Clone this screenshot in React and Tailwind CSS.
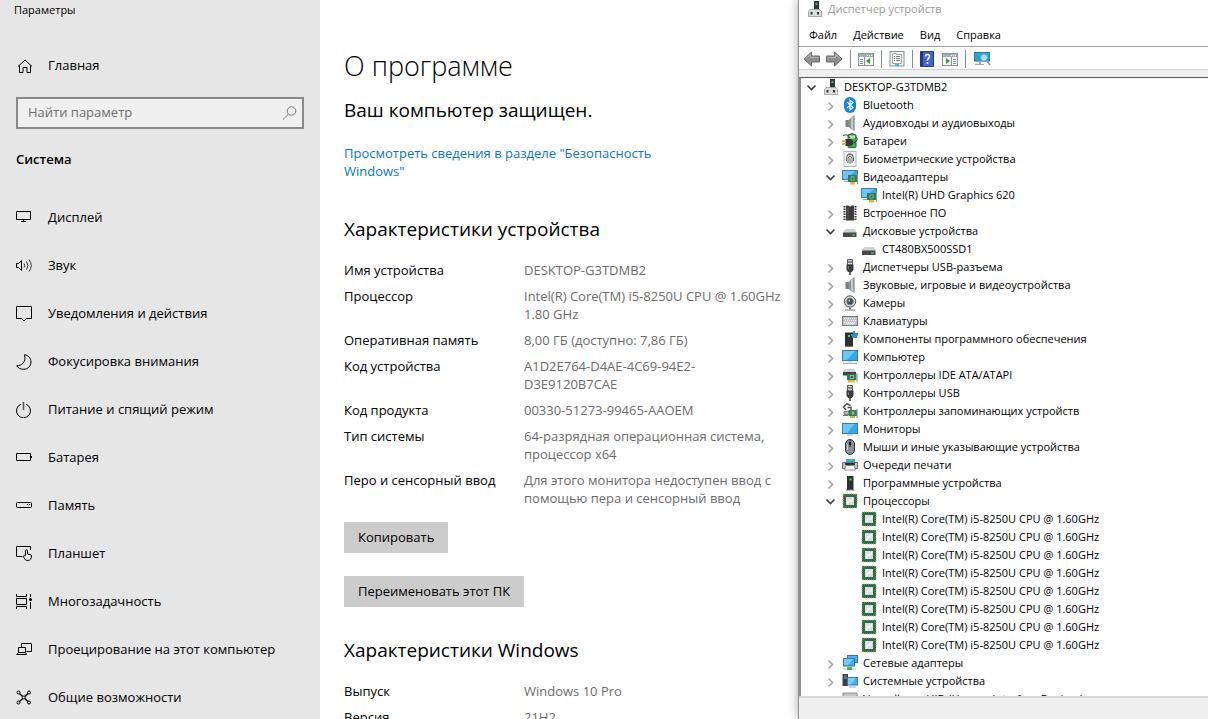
import { useState } from "react";

/* ---------- settings sidebar icons ---------- */

const Glyph = ({ children }) => (
  <svg
    viewBox="0 0 16 16"
    className="w-4 h-4 shrink-0"
    fill="none"
    stroke="#000"
    strokeWidth="1"
    aria-hidden="true"
  >
    {children}
  </svg>
);

const HomeIcon = () => (
  <Glyph>
    <path d="M2 8.500 9 2l7 6.500M3.500 7.500v7h3.500v-5h4v5h3.500v-7" />
  </Glyph>
);

const DisplayIcon = () => (
  <Glyph>
    <path d="M.5 1.500h14v8H.5zM7.500 9.500v2M5 11.500h5" />
  </Glyph>
);

const SoundIcon = () => (
  <Glyph>
    <path d="M.5 5.500h2l3-3v10l-3-3h-2z" />
    <path d="M8 5.500q1.500 2 0 4M10.500 3.500q3 4 0 8M13 1.500q4.500 6 0 12" stroke="#333" />
  </Glyph>
);

const NotifyIcon = () => (
  <Glyph>
    <path d="M.5.5h15v12h-5l-2.500 2.500-2.500-2.500h-5z" />
  </Glyph>
);

const MoonIcon = () => (
  <Glyph>
    <path d="M8.500.7c4 .8 6.500 3.600 6.500 7.300 0 4.200-3.300 7.300-7.500 7.300-3 0-5.500-1.300-6.800-3.600C5.500 12 10.500 8 8.500.7z" />
  </Glyph>
);

const PowerIcon = () => (
  <Glyph>
    <path d="M5 2.200a7 7 0 1 0 5 0" />
    <path d="M7.500 0v8" stroke="#555" strokeWidth="1.500" />
  </Glyph>
);

const BatteryIcon = () => (
  <Glyph>
    <path d="M.5 3.500h14v7H.5zM15.500 6v2" />
  </Glyph>
);

const StorageIcon = () => (
  <Glyph>
    <rect x=".5" y="4.500" width="15" height="5" rx="1" />
    <path d="M11 6.500h1M13 6.500h1" />
  </Glyph>
);

const TabletIcon = () => (
  <Glyph>
    <path d="M14.500 4V.5H.5v10h6" />
    <path d="M9.500 9.500V4.800q0-1 1-1t1 1V8l2.500.5q1.500.3 1.500 1.500c0 2-.8 4.500-3.700 4.500-2.300 0-3.800-1.500-4.300-4.500q.5-1.200 2-.5z" />
  </Glyph>
);

const MultitaskIcon = () => (
  <Glyph>
    <path d="M.5 0v2.500h10V0M.5 15v-2.500h10V15M.5 4.500h10v6H.5zM14.500 0v3M14.500 8v7" />
    <circle cx="14.500" cy="5.500" r="1.500" fill="#000" stroke="none" />
  </Glyph>
);

const ProjectIcon = () => (
  <Glyph>
    <path d="M5.500 5V1.500h10v8h-5" />
    <path d="M2.500 5.500h7v5h-7zM2.500 10.500l-1.800 2h9.800l-1-2" />
  </Glyph>
);

const SharedIcon = () => (
  <Glyph>
    <circle cx="2.500" cy="2.500" r="1.500" />
    <circle cx="13" cy="2.500" r="1.500" />
    <circle cx="2.500" cy="12.500" r="1.500" />
    <circle cx="13" cy="12.500" r="1.500" />
    <circle cx="7.800" cy="7.500" r="1.500" />
    <path d="M3.500 3.500l3.200 3M12 3.500 8.800 6.500M3.500 11.500l3.200-3M12 11.500 8.800 8.500" strokeWidth="1.300" />
  </Glyph>
);

const SearchIcon = () => (
  <svg viewBox="0 0 16 16" className="w-4 h-4 shrink-0" fill="none" stroke="#777" aria-hidden="true">
    <circle cx="9.500" cy="6" r="4.300" />
    <path d="M6.500 9.200 1 14.500" />
  </svg>
);

/* ---------- device manager icons ---------- */

const Art = ({ children }) => (
  <svg viewBox="0 0 16 16" className="w-4 h-4 shrink-0" fill="none" aria-hidden="true">
    {children}
  </svg>
);

const RootIcon = () => (
  <Art>
    <path d="M7 0h5v8H7z" fill="#2d3a33" />
    <path d="M8.500 2h2v2h-2z" fill="#6fa085" />
    <path d="M3 8.500h10l1.500 2v5H1.500v-5z" fill="#dcdcde" stroke="#8b8b90" strokeWidth=".7" />
    <path d="M3.500 11h2v2.500h-2zM10 11h2v2.500h-2z" fill="#333" />
  </Art>
);

const BluetoothIcon = () => (
  <Art>
    <rect x="2" y="0" width="12" height="16" rx="6" fill="#0a84e8" />
    <path d="M5 5l6 5.500L8 13V3l3 2.500L5 11" stroke="#fff" strokeWidth="1.200" />
  </Art>
);

const SpeakerIcon = () => (
  <Art>
    <path d="M3 5h4v7H3z" fill="#7b7f83" />
    <path d="M3.500 5v7" stroke="#b7bbbf" />
    <path d="M6.500 5l5-4.500v15l-5-3.500z" fill="#8d9297" />
    <path d="M9 3l2-1.800v13.500L9 13z" fill="#c3c8cc" />
    <path d="M11.500.5h1v15h-1z" fill="#676c71" />
  </Art>
);

const BatteriesIcon = () => (
  <Art>
    <rect x="6" y="1.500" width="8" height="13" rx="1" fill="#37b453" stroke="#1c6b32" />
    <path d="M7 2.500h6v3H7z" fill="#b9e8b2" />
    <path d="M8.500 0h3v2h-3z" fill="#666" />
    <path d="M1 2.500q5-2 7 2.500" stroke="#444" />
    <path d="M3.500 6h4q4 0 4 3.500T7.500 13h-4z" fill="#343a36" />
    <path d="M0 8h4M0 11h4" stroke="#c3a43a" strokeWidth="1.500" />
    <path d="M14 4q3 3-2 6" stroke="#333" />
  </Art>
);

const FingerprintIcon = () => (
  <Art>
    <rect x="2" y=".5" width="12" height="15" fill="#f4f4f2" stroke="#a9bcc4" />
    <path
      d="M4.500 10V7q0-3.500 3.500-3.500T11.500 7v3M6 12V7.500Q6 5.500 8 5.500t2 2V12M8 7.500V13M4.800 4.500Q8 1 11.200 4.500"
      stroke="#555"
      strokeWidth=".9"
    />
  </Art>
);

const Screen = ({ y = 2, h = 9 }) => (
  <>
    <rect x=".5" y={y} width="15" height={h} fill="#39a5ee" stroke="#3a7dab" strokeWidth="1" />
    <path d={`M1 ${y + 0.5}h12L5 ${y + h - 0.5}H1z`} fill="#6cc6f8" />
  </>
);

const DisplayAdapterIcon = () => (
  <Art>
    <Screen y={1.5} />
    <path d="M2 12.500h4" stroke="#9aa3a8" />
    <path d="M6 6h9v7H6z" fill="#2f7d4f" />
    <path d="M8.500 7.500h4v4h-4z" fill="#7fbd90" />
    <path d="M9.500 8.500h2v2h-2z" fill="#245c3a" />
    <path d="M8 13h5v2.500H8z" fill="#e0b93a" />
    <path d="M15.500 5v10" stroke="#999" />
  </Art>
);

const FirmwareIcon = () => (
  <Art>
    <path d="M2.500 1v14M13.500 1v14" stroke="#333" strokeWidth="2" strokeDasharray="1.500 1" />
    <path d="M4 .5h2.500q1.500 2 3 0H12v15H4z" fill="#3c3c3e" />
    <path d="M6 3v11" stroke="#5b5b5e" />
  </Art>
);

const DiskIcon = () => (
  <Art>
    <path d="M3 6h10l2 4H1z" fill="#cfd1d3" />
    <path d="M1 9.500h13.500V14H1z" fill="#45494c" />
    <path d="M10 12h3" stroke="#4ee06b" />
  </Art>
);

const UsbIcon = () => (
  <Art>
    <path d="M5.500.5h5V6h-5z" fill="#d8d8d8" stroke="#555" />
    <path d="M7 2v2M9 2v2" stroke="#333" />
    <path d="M4.500 5.500h7v5L10 13H6l-1.500-2.500z" fill="#3a3a3a" />
    <path d="M8 12v4" stroke="#3a3a3a" strokeWidth="1.500" />
    <path d="M6.500 7v3" stroke="#777" />
  </Art>
);

const CameraIcon = () => (
  <Art>
    <circle cx="8" cy="6.500" r="5.700" fill="#c9ccce" stroke="#55595c" />
    <circle cx="8" cy="6.500" r="3.200" fill="#3c4650" stroke="#777" />
    <circle cx="7.300" cy="5.700" r="1" fill="#b5c8d8" />
    <path d="M7 12.500h2v2H7z" fill="#777" />
    <path d="M3 15h10" stroke="#777" />
  </Art>
);

const KeyboardIcon = () => (
  <Art>
    <rect x=".5" y="3.500" width="15" height="9" fill="#bfc3c6" stroke="#73797e" />
    <path d="M2 5.500h12M2 9.500h12" stroke="#fff" strokeDasharray="1 1" />
    <path d="M3 7.500h11" stroke="#fff" strokeDasharray="1 1" />
    <path d="M4 11h8" stroke="#f2f2f2" />
  </Art>
);

const SoftwareComponentIcon = () => (
  <Art>
    <path d="M3 1.500h8V15H3z" fill="#2e3133" />
    <path d="M6 4h2v2H6z" fill="#3ee05c" />
    <path d="M3 15.500h8" stroke="#777" />
    <path d="M11 0h2v2h3v2.500h-1V7h-5V5h-1V3h2z" fill="#2c8ed6" />
  </Art>
);

const ComputerIcon = () => (
  <Art>
    <Screen y={1.5} h={10} />
    <path d="M1 14.500h14" stroke="#9db0bb" />
    <path d="M6 12h4v1.500H6z" fill="#cfd5d8" />
  </Art>
);

const IdeIcon = () => (
  <Art>
    <path d="M3 2h9l2 3H1z" fill="#cfd2d4" />
    <path d="M1 5h13v3.500H1z" fill="#3d4144" />
    <path d="M5 7h9.500v6H5z" fill="#2f7d4f" />
    <path d="M8 8h4v4H8z" fill="#7fbd90" />
    <path d="M9 9h2v2H9z" fill="#245c3a" />
    <path d="M6 13h7v2.500H6z" fill="#e0b93a" />
    <path d="M15 6v9" stroke="#999" />
  </Art>
);

const StorageControllerIcon = () => (
  <Art>
    <path d="M8.500 2.500 5 .8 1.500 4 4 7M5.500 4.500H9V7" stroke="#4c4f51" strokeWidth="1.500" />
    <path d="M2 8.500h6v3H2z" fill="#b9bcbe" stroke="#555" strokeWidth=".7" />
    <path d="M6.500 7h8.500v6H6.500z" fill="#2f7d4f" />
    <path d="M9.500 8.500h3v3h-3z" fill="#7fbd90" />
    <path d="M8 13h5v2H8z" fill="#d6b13c" />
    <path d="M15 6v9" stroke="#888" />
    <path d="M1 12.500h5" stroke="#777" />
  </Art>
);

const MonitorIcon = () => (
  <Art>
    <Screen y={2.5} h={10} />
    <path d="M5 14h6" stroke="#9db0bb" />
  </Art>
);

const MouseIcon = () => (
  <Art>
    <rect x="3.500" y=".5" width="9" height="15" rx="4.500" fill="#8a8f94" stroke="#303336" />
    <path d="M8 1v7" stroke="#303336" />
    <path d="M8 3v3" stroke="#111" strokeWidth="2" />
    <path d="M5.500 5v6" stroke="#c8ccd0" />
  </Art>
);

const PrinterIcon = () => (
  <Art>
    <path d="M4 2h9v4H4z" fill="#35a4e8" />
    <path d="M7 2h3v2H7z" fill="#42c56a" />
    <path d="M.5 5.500h15v6H.5z" fill="#c2c5c8" stroke="#6c7175" />
    <path d="M3 6h10v2H3z" fill="#333" />
    <path d="M4 8.500h8l1.500 4.500h-11z" fill="#fff" stroke="#777" strokeWidth=".8" />
  </Art>
);

const SoftwareDeviceIcon = () => (
  <Art>
    <path d="M5 1h6.500v14H5z" fill="#2e3133" />
    <path d="M7.500 3.500h2v2h-2z" fill="#3ee05c" />
    <path d="M4 15h8.500" stroke="#777" />
  </Art>
);

const CpuIcon = () => (
  <Art>
    <rect x="1" y="1" width="14" height="14" fill="#2f6a4b" />
    <rect x="1" y="1" width="14" height="14" stroke="#cdbf7d" strokeWidth=".8" strokeDasharray="1 1" />
    <rect x="4" y="4" width="8" height="8" fill="#dcdcdc" />
    <path d="M5 11V8l6-3v3z" fill="#eeeeee" />
  </Art>
);

const NetworkIcon = () => (
  <Art>
    <rect x="5.500" y=".5" width="10" height="7" fill="#4cb4f1" stroke="#3479a5" />
    <rect x="1.500" y="3.500" width="11" height="7.500" fill="#46adec" stroke="#3479a5" />
    <path d="M2 4h9l-5 6H2z" fill="#7accf8" />
    <path d="M7 11v3M1 14h13" stroke="#b9c2c6" />
    <path d="M5 12h5v3H5z" fill="#43b54c" />
  </Art>
);

const SystemIcon = () => (
  <Art>
    <path d="M.5 1h5.500v12H.5z" fill="#3d4144" />
    <path d="M2 3h2.500M2 5h2.500" stroke="#a5aaad" />
    <rect x="5.500" y="4.500" width="10" height="7.500" fill="#46adec" stroke="#3479a5" />
    <path d="M6 5h8l-5 6.500H6z" fill="#7accf8" />
    <path d="M7 14h7" stroke="#9db0bb" />
  </Art>
);

const HidIcon = () => (
  <Art>
    <path d="M1 2h14v10H1z" fill="#c5c8ca" stroke="#8d9194" />
  </Art>
);

/* ---------- toolbar icons ---------- */

const ArrowIcon = ({ flip }) => (
  <svg viewBox="0 0 18 16" className={`w-[18px] h-4 ${flip ? "-scale-x-100" : ""}`} aria-hidden="true">
    <path d="M1 8 8.500 1v4h8v6h-8v4z" fill="#8e8e8e" stroke="#6a6a6a" />
    <path d="M3 7.500 7.500 3.500v3h8" fill="none" stroke="#b9b9b9" />
  </svg>
);

const PaneIcon = ({ right }) => (
  <svg viewBox="0 0 16 16" className="w-4 h-4" fill="none" aria-hidden="true">
    <rect x=".5" y="2.500" width="15" height="12" fill="#f6f6f4" stroke="#8c949b" />
    <path d="M1 4.500h14" stroke="#a7b0b8" strokeWidth="3" />
    <path d="M9 4.500h5" stroke="#fff" strokeDasharray="1 1" />
    <path d={right ? "M9.500 6v8" : "M6.500 6v8"} stroke="#8c949b" />
    <path d={right ? "M11 8.500h3M11 10.500h3M11 12.500h3" : "M2 8.500h3M2 10.500h3M2 12.500h3"} stroke="#7d8891" />
    <path d={right ? "M4 7v6l4-3z" : "M12 7v6l-4-3z"} fill="#35a22f" />
  </svg>
);

const PropertiesIcon = () => (
  <svg viewBox="0 0 16 16" className="w-4 h-4" fill="none" aria-hidden="true">
    <rect x="1" y=".5" width="14" height="14.500" fill="#f3f3f3" stroke="#8a8f94" />
    <path d="M3.500 2.500h4v1h5v9h-9z" fill="#fff" stroke="#a2a7ab" />
    <path d="M5 5.500h1M7 5.500h4M5 7.500h1M7 7.500h4M5 9.500h1M7 9.500h4" stroke="#777c80" />
    <path d="M6 14h4" stroke="#41b8d8" strokeWidth="2" />
  </svg>
);

const HelpIcon = () => (
  <svg viewBox="0 0 14 16" className="w-3.5 h-4" fill="none" aria-hidden="true">
    <path d="M.5.5h13v15H.5z" fill="#4464c8" stroke="#23398a" />
    <path d="M1 1h2v14H1z" fill="#22388c" />
    <path d="M5.500 5.500q0-2 2-2t2 2c0 1.500-2 1.700-2 4M7.500 11v2" stroke="#fff" strokeWidth="1.600" />
  </svg>
);

const ScanIcon = () => (
  <svg viewBox="0 0 18 16" className="w-[18px] h-4" fill="none" aria-hidden="true">
    <rect x="1.500" y="1.500" width="15" height="8.500" fill="#2ea3d9" stroke="#2a7ca6" />
    <path d="M7 10v3" stroke="#9aabb4" strokeWidth="2" />
    <path d="M2 13.500h9" stroke="#9aabb4" />
    <circle cx="11" cy="6.500" r="3.700" fill="#a8e1f7" stroke="#5f93ad" />
    <path d="M13.500 9.500l3.500 4.500" stroke="#8097a5" strokeWidth="1.600" />
  </svg>
);

/* ---------- data ---------- */

const navItems = [
  { label: "Дисплей", Icon: DisplayIcon },
  { label: "Звук", Icon: SoundIcon },
  { label: "Уведомления и действия", Icon: NotifyIcon },
  { label: "Фокусировка внимания", Icon: MoonIcon },
  { label: "Питание и спящий режим", Icon: PowerIcon },
  { label: "Батарея", Icon: BatteryIcon },
  { label: "Память", Icon: StorageIcon },
  { label: "Планшет", Icon: TabletIcon },
  { label: "Многозадачность", Icon: MultitaskIcon },
  { label: "Проецирование на этот компьютер", Icon: ProjectIcon },
  { label: "Общие возможности", Icon: SharedIcon },
];

const deviceSpecs = [
  ["Имя устройства", "DESKTOP-G3TDMB2"],
  ["Процессор", "Intel(R) Core(TM) i5-8250U CPU @ 1.60GHz 1.80 GHz"],
  ["Оперативная память", "8,00 ГБ (доступно: 7,86 ГБ)"],
  ["Код устройства", "A1D2E764-D4AE-4C69-94E2-D3E9120B7CAE"],
  ["Код продукта", "00330-51273-99465-AAOEM"],
  ["Тип системы", "64-разрядная операционная система, процессор x64"],
  ["Перо и сенсорный ввод", "Для этого монитора недоступен ввод с помощью пера и сенсорный ввод"],
];

const windowsSpecs = [
  ["Выпуск", "Windows 10 Pro"],
  ["Версия", "21H2"],
];

const cpu = { label: "Intel(R) Core(TM) i5-8250U CPU @ 1.60GHz", Icon: CpuIcon };

const devices = [
  { label: "Bluetooth", Icon: BluetoothIcon },
  { label: "Аудиовходы и аудиовыходы", Icon: SpeakerIcon },
  { label: "Батареи", Icon: BatteriesIcon },
  { label: "Биометрические устройства", Icon: FingerprintIcon },
  {
    label: "Видеоадаптеры",
    Icon: DisplayAdapterIcon,
    children: [{ label: "Intel(R) UHD Graphics 620", Icon: DisplayAdapterIcon }],
  },
  { label: "Встроенное ПО", Icon: FirmwareIcon },
  {
    label: "Дисковые устройства",
    Icon: DiskIcon,
    children: [{ label: "CT480BX500SSD1", Icon: DiskIcon }],
  },
  { label: "Диспетчеры USB-разъема", Icon: UsbIcon },
  { label: "Звуковые, игровые и видеоустройства", Icon: SpeakerIcon },
  { label: "Камеры", Icon: CameraIcon },
  { label: "Клавиатуры", Icon: KeyboardIcon },
  { label: "Компоненты программного обеспечения", Icon: SoftwareComponentIcon },
  { label: "Компьютер", Icon: ComputerIcon },
  { label: "Контроллеры IDE ATA/ATAPI", Icon: IdeIcon },
  { label: "Контроллеры USB", Icon: UsbIcon },
  { label: "Контроллеры запоминающих устройств", Icon: StorageControllerIcon },
  { label: "Мониторы", Icon: MonitorIcon },
  { label: "Мыши и иные указывающие устройства", Icon: MouseIcon },
  { label: "Очереди печати", Icon: PrinterIcon },
  { label: "Программные устройства", Icon: SoftwareDeviceIcon },
  { label: "Процессоры", Icon: CpuIcon, children: Array(8).fill(cpu) },
  { label: "Сетевые адаптеры", Icon: NetworkIcon },
  { label: "Системные устройства", Icon: SystemIcon },
  { label: "Устройства HID (Human Interface Devices)", Icon: HidIcon },
];

/* ---------- settings window ---------- */

const Sidebar = () => (
  <aside className="w-80 shrink-0 bg-[#e6e6e6]">
    <div className="h-5 pl-3.5 text-[11px] leading-5">Параметры</div>
    <a href="#home" className="mt-[22px] h-12 px-4 flex items-center gap-4">
      <HomeIcon />
      Главная
    </a>
    <label className="mt-[7px] mx-4 h-8 pl-2.5 pr-1 flex items-center border-2 border-[#8a8a8a] bg-[#f0f0f0]">
      <input
        type="search"
        aria-label="Найти параметр"
        placeholder="Найти параметр"
        className="min-w-0 flex-1 bg-transparent outline-none placeholder:text-[#6e6e6e]"
      />
      <SearchIcon />
    </label>
    <h2 className="mt-5 px-4 leading-5 font-semibold">Система</h2>
    <nav className="mt-[25px]">
      {navItems.map(({ label, Icon }) => (
        <a key={label} href="#section" className="h-12 px-4 flex items-center gap-4 whitespace-nowrap">
          <Icon />
          {label}
        </a>
      ))}
    </nav>
  </aside>
);

const Specs = ({ rows }) => (
  <dl className="flex flex-col gap-2 leading-[18px]">
    {rows.map(([name, value]) => (
      <div key={name} className="flex">
        <dt className="w-[180px] shrink-0">{name}</dt>
        <dd className="flex-1 pr-3 text-[#6b6b6b]">{value}</dd>
      </div>
    ))}
  </dl>
);

const GrayButton = ({ children }) => (
  <button type="button" className="h-[31px] px-3.5 bg-[#cccccc]">
    {children}
  </button>
);

const About = () => (
  <main className="w-[478px] shrink-0 pl-6 pt-12 bg-white">
    <h1 className="text-[27px] leading-9 font-light">О программе</h1>
    <p className="mt-3 text-[19px] leading-7">Ваш компьютер защищен.</p>
    <a href="#security" className="mt-5 block w-80 leading-[18px] text-[#0a74c9]">
      Просмотреть сведения в разделе "Безопасность Windows"
    </a>
    <h2 className="mt-[35px] mb-[18px] text-[19px] leading-7">Характеристики устройства</h2>
    <Specs rows={deviceSpecs} />
    <div className="mt-[15px] flex flex-col items-start gap-[23px]">
      <GrayButton>Копировать</GrayButton>
      <GrayButton>Переименовать этот ПК</GrayButton>
    </div>
    <h2 className="mt-[29px] mb-[18px] text-[19px] leading-7">Характеристики Windows</h2>
    <Specs rows={windowsSpecs} />
  </main>
);

/* ---------- device manager window ---------- */

const Chevron = ({ open }) => (
  <svg viewBox="0 0 16 16" className="w-4 h-4" fill="none" aria-hidden="true">
    {open ? (
      <path d="M4.500 6.500l4 4 4-4" stroke="#404040" strokeWidth="1.700" />
    ) : (
      <path d="M6.500 5.500l4 4-4 4" stroke="#a0a0a0" strokeWidth="1.500" />
    )}
  </svg>
);

const TreeNode = ({ label, Icon, children, leaf }) => {
  const [open, setOpen] = useState(Boolean(children));

  return (
    <li>
      <div className="h-[18px] flex items-center whitespace-nowrap">
        {leaf ? (
          <span className="w-4" />
        ) : (
          <button type="button" aria-label={label} aria-expanded={open} onClick={() => setOpen(!open)}>
            <Chevron open={open} />
          </button>
        )}
        <span className="ml-1 mr-[5px]">
          <Icon />
        </span>
        {label}
      </div>
      {open && children && (
        <ul className="pl-[19px]">
          {children.map((child, i) => (
            <TreeNode key={i} leaf={!child.group} {...child} />
          ))}
        </ul>
      )}
    </li>
  );
};

const groups = devices.map((device) => ({ ...device, group: true }));

const ToolButton = ({ label, children }) => (
  <button type="button" aria-label={label} className="h-5 flex items-center">
    {children}
  </button>
);

const Separator = () => <span className="w-px h-[18px] bg-[#8c8c8c]" />;

const DeviceManager = () => (
  <section className="flex-1 min-w-0 flex flex-col border-l border-[#8f8f8f] bg-white text-[11px] shadow-[0_0_10px_rgba(0,0,0,0.35)]">
    <header className="h-5 pl-2 pb-0.5 flex items-center gap-[5px] text-[#999999]">
      <RootIcon />
      Диспетчер устройств
    </header>
    <nav className="h-[26px] pl-2.5 pt-1 flex items-center gap-4">
      <button type="button">Файл</button>
      <button type="button">Действие</button>
      <button type="button">Вид</button>
      <button type="button">Справка</button>
    </nav>
    <div className="h-6 pl-1 pt-0.5 flex items-center gap-[7px] border-y border-t-[#a0a0a0] border-b-[#d0d0d0]">
      <div className="flex items-center gap-1">
        <ToolButton label="Назад"><ArrowIcon /></ToolButton>
        <ToolButton label="Вперед"><ArrowIcon flip /></ToolButton>
      </div>
      <Separator />
      <ToolButton label="Дерево консоли"><PaneIcon /></ToolButton>
      <Separator />
      <ToolButton label="Свойства"><PropertiesIcon /></ToolButton>
      <Separator />
      <div className="flex items-center gap-2">
        <ToolButton label="Справка"><HelpIcon /></ToolButton>
        <ToolButton label="Панель действий"><PaneIcon right /></ToolButton>
      </div>
      <Separator />
      <ToolButton label="Обновить конфигурацию"><ScanIcon /></ToolButton>
    </div>
    <div className="h-[7px] shrink-0 bg-[#f0f0f0]" />
    <ul className="flex-1 min-h-0 overflow-hidden pl-0.5 border-t border-l-2 border-t-[#555555] border-l-[#8f8f8f]">
      <TreeNode label="DESKTOP-G3TDMB2" Icon={RootIcon} children={groups} />
    </ul>
    <footer className="h-[23px] shrink-0 border-t-2 border-[#d9d9d9] bg-[#f0f0f0]" />
  </section>
);

export default function App() {
  return (
    <div className="h-screen flex overflow-hidden text-[13px] text-black font-['Open_Sans','Noto_Sans',sans-serif]">
      <Sidebar />
      <About />
      <DeviceManager />
    </div>
  );
}
